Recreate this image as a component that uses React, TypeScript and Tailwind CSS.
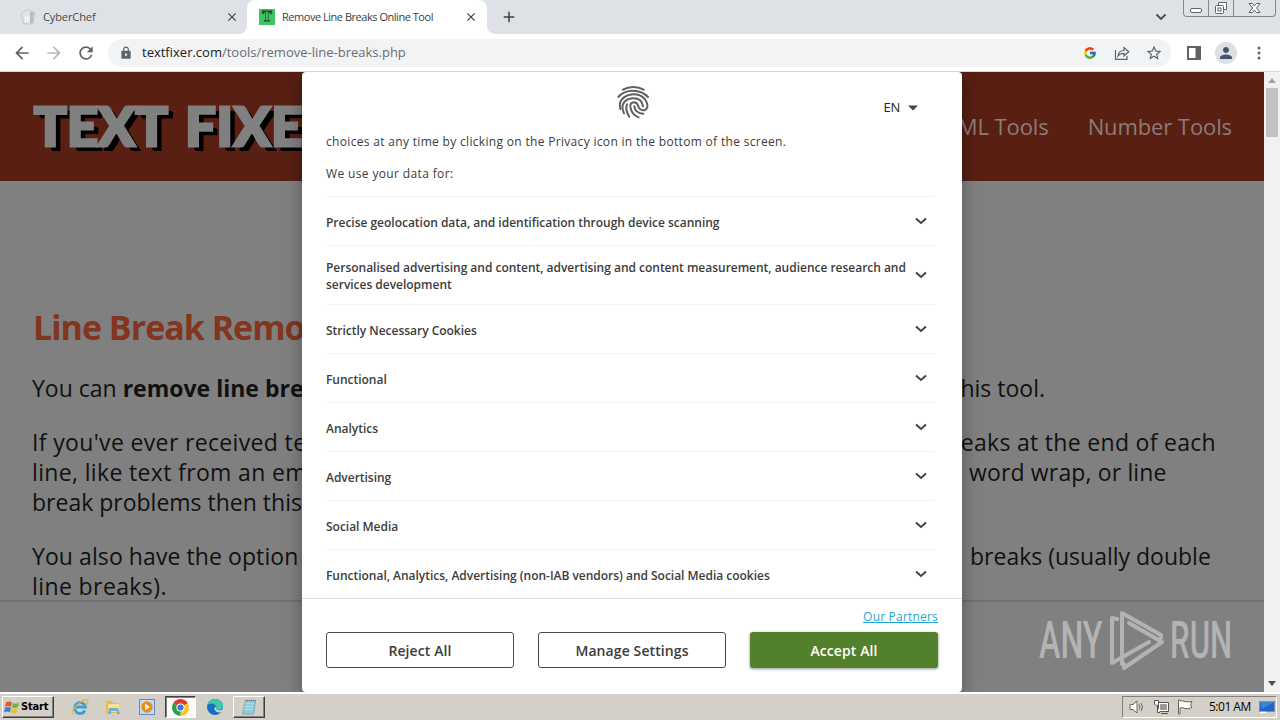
import type { ReactNode } from "react";
import { MdAdd, MdArrowBack, MdArrowForward, MdClose, MdLock, MdPerson, MdRefresh, MdStarBorder } from "react-icons/md";
import { FcGoogle } from "react-icons/fc";

function ChefHat() {
  return (
    <svg viewBox="0 0 16 16" className="h-4 w-4 shrink-0">
      <path d="M3 14V8.500C.8 7.500.8 4 3.500 3.500 5 1 9 .8 10 2c2.500-.6 5 1 4.600 3.600 0 2-.6 2.600-1.200 3V14c-3 1.400-7 1.400-10.400 0z" fill="#e4e4e4" stroke="#b9b9b9" strokeWidth=".7" />
      <path d="M10 3v11.500l3-.8V8l1.500-3-2-2.500z" fill="#bdbdbd" />
      <path d="M5.500 7v6M8 7v6.500" stroke="#fff" />
    </svg>
  );
}

function TabStrip() {
  return (
    <div className="flex h-[34px] bg-[#dee1e6] text-[11px] text-[#45494d]">
      <div className="flex w-[247px] items-center pr-[8px] pl-[20px]">
        <ChefHat />
        <span className="ml-[7px] flex-1 tracking-[-0.1px]">CyberChef</span>
        <MdClose className="h-[14px] w-[14px] text-[#3c4043]" />
      </div>
      <div className="relative flex w-[240px] items-center rounded-t-lg bg-white pr-[9px] pl-[12px] text-[#3c4043]">
        <span className="absolute bottom-0 -left-2 h-2 w-2 bg-white"><span className="block h-2 w-2 rounded-br-lg bg-[#dee1e6]" /></span>
        <span className="absolute -right-2 bottom-0 h-2 w-2 bg-white"><span className="block h-2 w-2 rounded-bl-lg bg-[#dee1e6]" /></span>
        <span className="flex h-4 w-4 items-center justify-center bg-[#3fc55f] font-['Liberation_Serif',serif] text-[14px] leading-none font-bold text-[#9af0ac] [-webkit-text-stroke:1px_#174d22]">T</span>
        <span className="ml-[7px] flex-1 tracking-[-0.47px] whitespace-nowrap">Remove Line Breaks Online Tool</span>
        <MdClose className="h-[14px] w-[14px]" />
      </div>
      <MdAdd className="mt-[8px] ml-[13px] h-[18px] w-[18px] text-[#3c4043]" />
      <div className="flex-1" />
      <svg viewBox="0 0 12 8" className="mt-[13px] mr-[16px] h-2 w-3"><path d="M1.500 1.500 6 6l4.500-4.500" fill="none" stroke="#45494d" strokeWidth="1.800" /></svg>
      <div className="mr-[4px] flex h-[17px] w-[93px] rounded-b-[4px] border border-t-0 border-[#83878d]">
        <svg viewBox="0 0 91 16" className="h-4 w-[91px]" fill="none" stroke="#60646a">
          <path d="M24.500 0v16M49.500 0v16" stroke="#83878d" />
          <rect x="6.500" y="8.500" width="11" height="4" rx="1.500" fill="#fff" />
          <path d="M34.500 5V2.500h8v7H40" fill="#fff" />
          <rect x="31.500" y="5.500" width="8" height="8" rx="1" fill="#fff" />
          <rect x="34" y="8" width="3" height="3" />
          <path d="M65 3.500h3.500l2 2.500 2-2.500H76l-3.500 4.500 3.500 4.500h-3.500l-2-2.500-2 2.500H65l3.500-4.500z" fill="#fff" />
        </svg>
      </div>
    </div>
  );
}

function Toolbar() {
  return (
    <div className="flex h-[38px] items-center border-b border-[#d5d8da] bg-white text-[#5f6368]">
      <MdArrowBack className="ml-[12px] h-[20px] w-[20px]" />
      <MdArrowForward className="ml-[12px] h-[20px] w-[20px] text-[#b6b9bc]" />
      <MdRefresh className="ml-[12px] h-[20px] w-[20px]" />
      <div className="ml-[12px] flex h-[28px] w-[1063px] items-center rounded-full bg-[#f1f3f4] pr-[8px] pl-[11px]">
        <MdLock className="h-[14px] w-[14px]" />
        <span className="ml-[9px] flex-1 text-[13px] text-[#6a6e73]"><span className="text-[#202124]">textfixer.com</span>/tools/remove-line-breaks.php</span>
        <FcGoogle className="h-[14px] w-[14px]" />
        <svg viewBox="0 0 16 16" className="ml-[17px] h-4 w-4" fill="none" stroke="#5f6368" strokeWidth="1.200">
          <path d="M1.500 5v9.400h11.500V11" />
          <path d="M4 11c.5-4 3-5.500 6-5.500V2.500l4.800 4.300L10 11V8.300C7.500 8.200 5.500 9 4 11z" />
        </svg>
        <MdStarBorder className="ml-[15px] h-[18px] w-[18px]" />
      </div>
      <svg viewBox="0 0 14 14" className="ml-[16px] h-[14px] w-[14px]"><path d="M1 1h12v12H1z" fill="none" stroke="#5f6368" strokeWidth="2" /><path d="M8.500 1H14v12H8.500z" fill="#5f6368" /></svg>
      <span className="ml-[14px] flex h-[22px] w-[22px] items-center justify-center rounded-full bg-[#dcdfe3] text-[#47536f]"><MdPerson className="h-[18px] w-[18px]" /></span>
      <svg viewBox="0 0 4 14" className="ml-[20px] h-[14px] w-1" fill="#5f6368"><circle cx="2" cy="2" r="1.500" /><circle cx="2" cy="7" r="1.500" /><circle cx="2" cy="12" r="1.500" /></svg>
    </div>
  );
}

function Line({ left, children, right }: { left: ReactNode; right?: string; children?: ReactNode }) {
  return (
    <div className="flex h-[30px] items-center whitespace-nowrap">
      <div className="w-[290px]">{left}</div>
      <div className="w-[640px]" />
      {right && <div className={right}>{children}</div>}
    </div>
  );
}

function SitePage() {
  return (
    <div className="h-full w-[1264px] overflow-hidden bg-[#808080]">
      <div className="flex h-[109px] items-center justify-between bg-[#581f12] pr-[32px] pl-[34px]">
        <div className="flex w-[300px] gap-[17px] pb-[8px] pt-[6px] font-['Lato',sans-serif] text-[54px] leading-[56px] font-black text-[#808080] [-webkit-text-stroke:3px_#808080] [text-shadow:6px_5px_0_#000,5px_4px_0_#000]">
          <span className="tracking-[0.3px]">TEXT</span>
          <span className="tracking-[0.8px]">FIXE</span>
        </div>
        <div className="flex gap-[39px] text-[22px] tracking-[-0.1px] text-[#8c7c77]">
          <span>HTML Tools</span>
          <span>Number Tools</span>
        </div>
      </div>
      <div className="h-[421px] border-b-2 border-[#707070] pt-[121px] pl-[33px] text-[23px] text-[#111]">
        <div className="h-[50px] text-[34px] leading-[50px] font-bold tracking-[-1px] whitespace-nowrap text-[#82351f]">Line Break Remo</div>
        <div className="-ml-px">
          <div className="mt-[21px]">
            <Line left={<>You can <b>remove line bre</b></>} right="flex w-[83px] justify-end">this tool.</Line>
          </div>
          <div className="mt-[24px]">
            <Line left={<span className="tracking-[0.35px]">If you've ever received te</span>} right="flex w-[254px] justify-end tracking-[0.3px]">eaks at the end of each</Line>
            <Line left={<span className="tracking-[0.35px]">line, like text from an em</span>} right="pl-[7px] tracking-[0.15px]">word wrap, or line</Line>
            <Line left="break problems then this" />
          </div>
          <div className="mt-[24px]">
            <Line left={<span className="tracking-[0.08px]">You also have the option</span>} right="pl-[8px]">breaks (usually double</Line>
            <Line left={<span className="tracking-[0.4px]">line breaks).</span>} />
          </div>
        </div>
      </div>
    </div>
  );
}

function Scrollbar() {
  return (
    <div className="flex w-4 flex-col items-center bg-[#f1f1f1]">
      <svg viewBox="0 0 16 16" className="h-4 w-4"><path d="M4 11l4-5 4 5z" fill="#a3a3a3" /></svg>
      <div className="h-[49px] w-3 bg-[#c1c1c1]" />
      <div className="flex-1" />
      <svg viewBox="0 0 16 16" className="h-4 w-4"><path d="M4 5l4 5 4-5z" fill="#505050" /></svg>
    </div>
  );
}

function Fingerprint() {
  return (
    <svg viewBox="0 0 126 126" className="h-[42px] w-[42px]" fill="none" stroke="#606060" strokeWidth="6" strokeLinecap="round">
      <path d="M33 26Q47 18 64 18T95 26" />
      <path d="M19 48Q35 29 63 29T108 48" />
      <path d="M25 84Q19 62 35 50Q48 40 64 40Q86 40 98 54Q108 67 106 78Q102 90 90 87Q80 84 78 74Q75 64 66 64Q54 65 55 77Q58 101 80 109" />
      <path d="M36 97Q26 76 37 63Q47 52 64 52Q90 52 93 76" />
      <path d="M52 107Q38 86 45 70" />
      <path d="M67 76Q70 97 94 98" />
    </svg>
  );
}

const purposes = [
  "Precise geolocation data, and identification through device scanning",
  "Personalised advertising and content, advertising and content measurement, audience research and services development",
  "Strictly Necessary Cookies",
  "Functional",
  "Analytics",
  "Advertising",
  "Social Media",
  "Functional, Analytics, Advertising (non-IAB vendors) and Social Media cookies",
];

function ConsentDialog() {
  return (
    <div className="absolute top-0 left-[302px] flex h-[620px] w-[660px] flex-col rounded-[4px] bg-white text-[#3c3c3c] shadow-[0_4px_18px_rgba(0,0,0,0.35)]">
      <div className="flex h-[60px] justify-end pr-[43px]">
        <div className="mt-[9px] mr-[230px]"><Fingerprint /></div>
        <div className="mt-[26px] flex h-5 items-center text-[13px] tracking-[-0.3px] text-[#222]">
          EN
          <svg viewBox="0 0 12 6" className="ml-[7px] h-[6px] w-[12px]"><path d="M1 .5h10L6 5.500z" fill="#444" /></svg>
        </div>
      </div>
      <div className="flex-1 pr-[28px] pl-[24px]">
        <div className="h-[20px] text-[12px] leading-[20px] tracking-[0.32px]">choices at any time by clicking on the Privacy icon in the bottom of the screen.</div>
        <div className="mt-[12px] h-[32px] text-[12px] leading-[20px] tracking-[0.36px]">We use your data for:</div>
        {purposes.map((p) => (
          <div key={p} className="flex min-h-[49px] items-center border-t border-[#f3f3f3] pt-[13px] pb-[11px] text-[12px] leading-[17px] font-semibold tracking-[-0.02px]">
            <span className="flex-1">{p}</span>
            <svg viewBox="0 0 12 8" className="mr-[7px] ml-[7px] h-2 w-3 -translate-y-px"><path d="M1 1.500l5 4.500 5-4.500" fill="none" stroke="#444" strokeWidth="2" /></svg>
          </div>
        ))}
      </div>
      <div className="h-[94px] shrink-0 border-t border-[#dcdcdc] px-[24px] pt-[9px]">
        <div className="h-[24px] text-right text-[12px] leading-[17px] tracking-[0.2px]"><a className="text-[#1fa7d1] underline">Our Partners</a></div>
        <div className="flex gap-[24px] text-[14px] font-semibold tracking-[0.1px]">
          <button className="h-9 w-[188px] rounded-[3px] border border-[#4a4a4a]">Reject All</button>
          <button className="h-9 w-[188px] rounded-[3px] border border-[#4a4a4a]">Manage Settings</button>
          <button className="h-9 w-[188px] rounded-[3px] bg-[#52802c] text-white shadow-[0_1px_3px_rgba(0,0,0,0.45)]">Accept All</button>
        </div>
      </div>
    </div>
  );
}

function Watermark() {
  return (
    <div className="absolute top-[538px] left-[1039px] flex h-[62px] w-[196px] items-center font-['Roboto',sans-serif] text-[52px] leading-[62px] font-medium text-[#b3b3b3]">
      <span className="w-[71px] shrink-0"><span className="inline-block origin-left scale-x-[0.62]">ANY</span></span>
      <svg viewBox="0 0 56 62" className="-ml-px h-[62px] w-[56px] shrink-0" fill="none" stroke="#b3b3b3" strokeWidth="4" strokeLinejoin="round" strokeLinecap="round">
        <path d="M13 54V3L52 25v3" />
        <path d="M20 13L53 32 15 58V54" />
        <path d="M8 9L3 8V53L40 32" />
      </svg>
      <span className="ml-[5px] w-[62px] shrink-0"><span className="inline-block origin-left scale-x-[0.6]">RUN</span></span>
    </div>
  );
}

function Chrome() {
  return (
    <svg viewBox="0 0 18 18" className="h-[17px] w-[17px]">
      <path d="M9 9L1.210 4.500A9 9 0 0 1 16.790 4.500z" fill="#e0392d" />
      <path d="M9 9L16.790 4.500A9 9 0 0 1 9 18z" fill="#fbc31d" />
      <path d="M9 9L9 18A9 9 0 0 1 1.210 4.500z" fill="#2c9e4b" />
      <circle cx="9" cy="9" r="4.300" fill="#fff" /><circle cx="9" cy="9" r="3.300" fill="#3478e5" />
    </svg>
  );
}

function Taskbar() {
  return (
    <div className="flex h-[28px] items-center border-t-2 border-white bg-[#d4d0c8] pr-[3px] pl-[2px]">
      <div className="flex h-[22px] w-[52px] items-center border border-t-white border-r-[#404040] border-b-[#404040] border-l-white text-black shadow-[inset_-1px_-1px_#808080]">
        <svg viewBox="0 0 16 14" className="mr-[1px] ml-[1px] h-[15px] w-[16px]">
          <path d="M2 2q3-2 6 0L7 6.500q-3-2-6 0z" fill="#e8562a" /><path d="M9 2.500q3 1.500 6-.5l-1 4.500q-3 2-6 .5z" fill="#71b63b" />
          <path d="M1 7.500q3-2 6 0L6 12q-3-2-6 0z" fill="#3a7fd0" /><path d="M8 8q3 1.500 6-.5L13 12q-3 2-6 .5z" fill="#f7bd2c" />
        </svg>
        <span className="font-['DejaVu_Sans_Condensed','DejaVu_Sans',sans-serif] text-[11px] font-bold tracking-[-0.15px]">Start</span>
      </div>
      <svg viewBox="0 0 18 18" className="ml-[17px] h-[18px] w-[18px]" fill="none">
        <path d="M14 12.500A5.500 5.500 0 1 1 14.500 9H5" stroke="#3a9fdc" strokeWidth="2.800" />
        <path d="M2 16Q-1 14 6 7T16.500 2.500Q18 4 15 7" stroke="#e0b93f" strokeWidth="1.300" />
      </svg>
      <svg viewBox="0 0 18 18" className="ml-[15px] h-[18px] w-[18px]">
        <path d="M2 3h6l1 2h6v10H2z" fill="#e3bd4d" /><path d="M4 6h11v8H4z" fill="#f7e28f" /><path d="M5 10h9l2 6h-3v-3H7v3H4z" fill="#6fafd6" />
      </svg>
      <svg viewBox="0 0 18 18" className="ml-[16px] h-[18px] w-[18px]">
        <rect x="1.500" y="1.500" width="15" height="15" fill="#bfdcf2" stroke="#5792c6" /><circle cx="9" cy="9" r="5.700" fill="#f08a1d" /><path d="M7.200 5.800L12 9l-4.800 3.200z" fill="#fff" />
      </svg>
      <div className="ml-[9px] flex h-[22px] w-[31px] items-center justify-center border border-t-[#404040] border-r-white border-b-white border-l-[#404040] bg-[#fbfaf8] shadow-[inset_1px_1px_#808080]"><Chrome /></div>
      <svg viewBox="0 0 18 18" className="ml-[10px] h-[18px] w-[18px]">
        <circle cx="9" cy="9" r="8" fill="#1670c2" />
        <path d="M1.200 7.500Q3 1 9.500 1 17 1.500 17 8q0 4-5 4-2.500 0-1.500-2Q10 5.500 5.500 5.500 2.500 5.500 1.200 7.500z" fill="#3fc8a8" />
        <path d="M10.500 10q-1 2 1.500 2.300 2.500.3 4.500-.8l1.500-1v3.500l-1.800 0q-2 .8-4.200.3-3.500-1-3.500-3.800 0-1.200 1-1.800z" fill="#d4d0c8" />
      </svg>
      <div className="ml-[9px] flex h-[22px] w-[32px] items-center justify-center border border-t-white border-r-[#404040] border-b-[#404040] border-l-white shadow-[inset_-1px_-1px_#808080]">
        <svg viewBox="0 0 16 18" className="h-[17px] w-[16px]"><path d="M4 2h11l-2 14H1z" fill="#8fcbdc" stroke="#6aa0b4" strokeWidth=".7" /><path d="M4 5h9M4 8h8.500M3.500 11H12" stroke="#b9e2ec" /><path d="M4 1.500h11" stroke="#555" strokeDasharray="1 1" /></svg>
      </div>
      <div className="flex-1" />
      <div className="flex h-[22px] w-[155px] items-center border border-t-[#808080] border-r-white border-b-white border-l-[#808080] pl-[6px]">
        <svg viewBox="0 0 16 16" className="h-4 w-4 shrink-0" fill="none" stroke="#666"><path d="M1 5.500h3L8 2v12l-4-3.500H1z" fill="#fff" /><path d="M10 5.500q2 2.500 0 5M12 4q3 4 0 8" /></svg>
        <svg viewBox="0 0 16 16" className="ml-[8px] h-4 w-4 shrink-0" fill="none" stroke="#555"><path d="M5.500 3.500h10v9h-10z" fill="#fff" /><path d="M7.500 5.500h6v5h-6z" fill="#999" stroke="#999" /><path d="M8 14.500h7" /><path d="M1.500 1.500h4v3.500l-1 1.500v7H7M1.500 1.500V5l2 2h1" fill="#fff" /></svg>
        <svg viewBox="0 0 16 16" className="ml-[8px] h-4 w-4 shrink-0" fill="#fff" stroke="#666"><path d="M1.500 1v14h1.500V9q3-1 5 .5 3 1 7-1L13.500 6l1.500-3.500q-4 1-7 0T3 2V1z" /></svg>
        <span className="ml-[16px] w-[42px] shrink-0 text-[12px] tracking-[-0.5px] whitespace-nowrap text-black">5:01 AM</span>
        <svg viewBox="0 0 16 16" className="ml-[8px] h-4 w-4 shrink-0"><rect x=".5" y="2.500" width="15" height="10" fill="#1f66c8" stroke="#7293b8" /><path d="M1 3h14L3 10z" fill="#3c83d8" /><path d="M1 13.500h6" stroke="#fff" strokeWidth="1.500" /></svg>
      </div>
    </div>
  );
}

export default function App() {
  return (
    <div className="flex h-[720px] w-[1280px] flex-col overflow-hidden font-['Open_Sans',sans-serif]">
      <TabStrip />
      <Toolbar />
      <div className="relative flex h-[620px] overflow-hidden bg-[#808080]">
        <SitePage />
        <Scrollbar />
        <ConsentDialog />
        <Watermark />
      </div>
      <Taskbar />
    </div>
  );
}
